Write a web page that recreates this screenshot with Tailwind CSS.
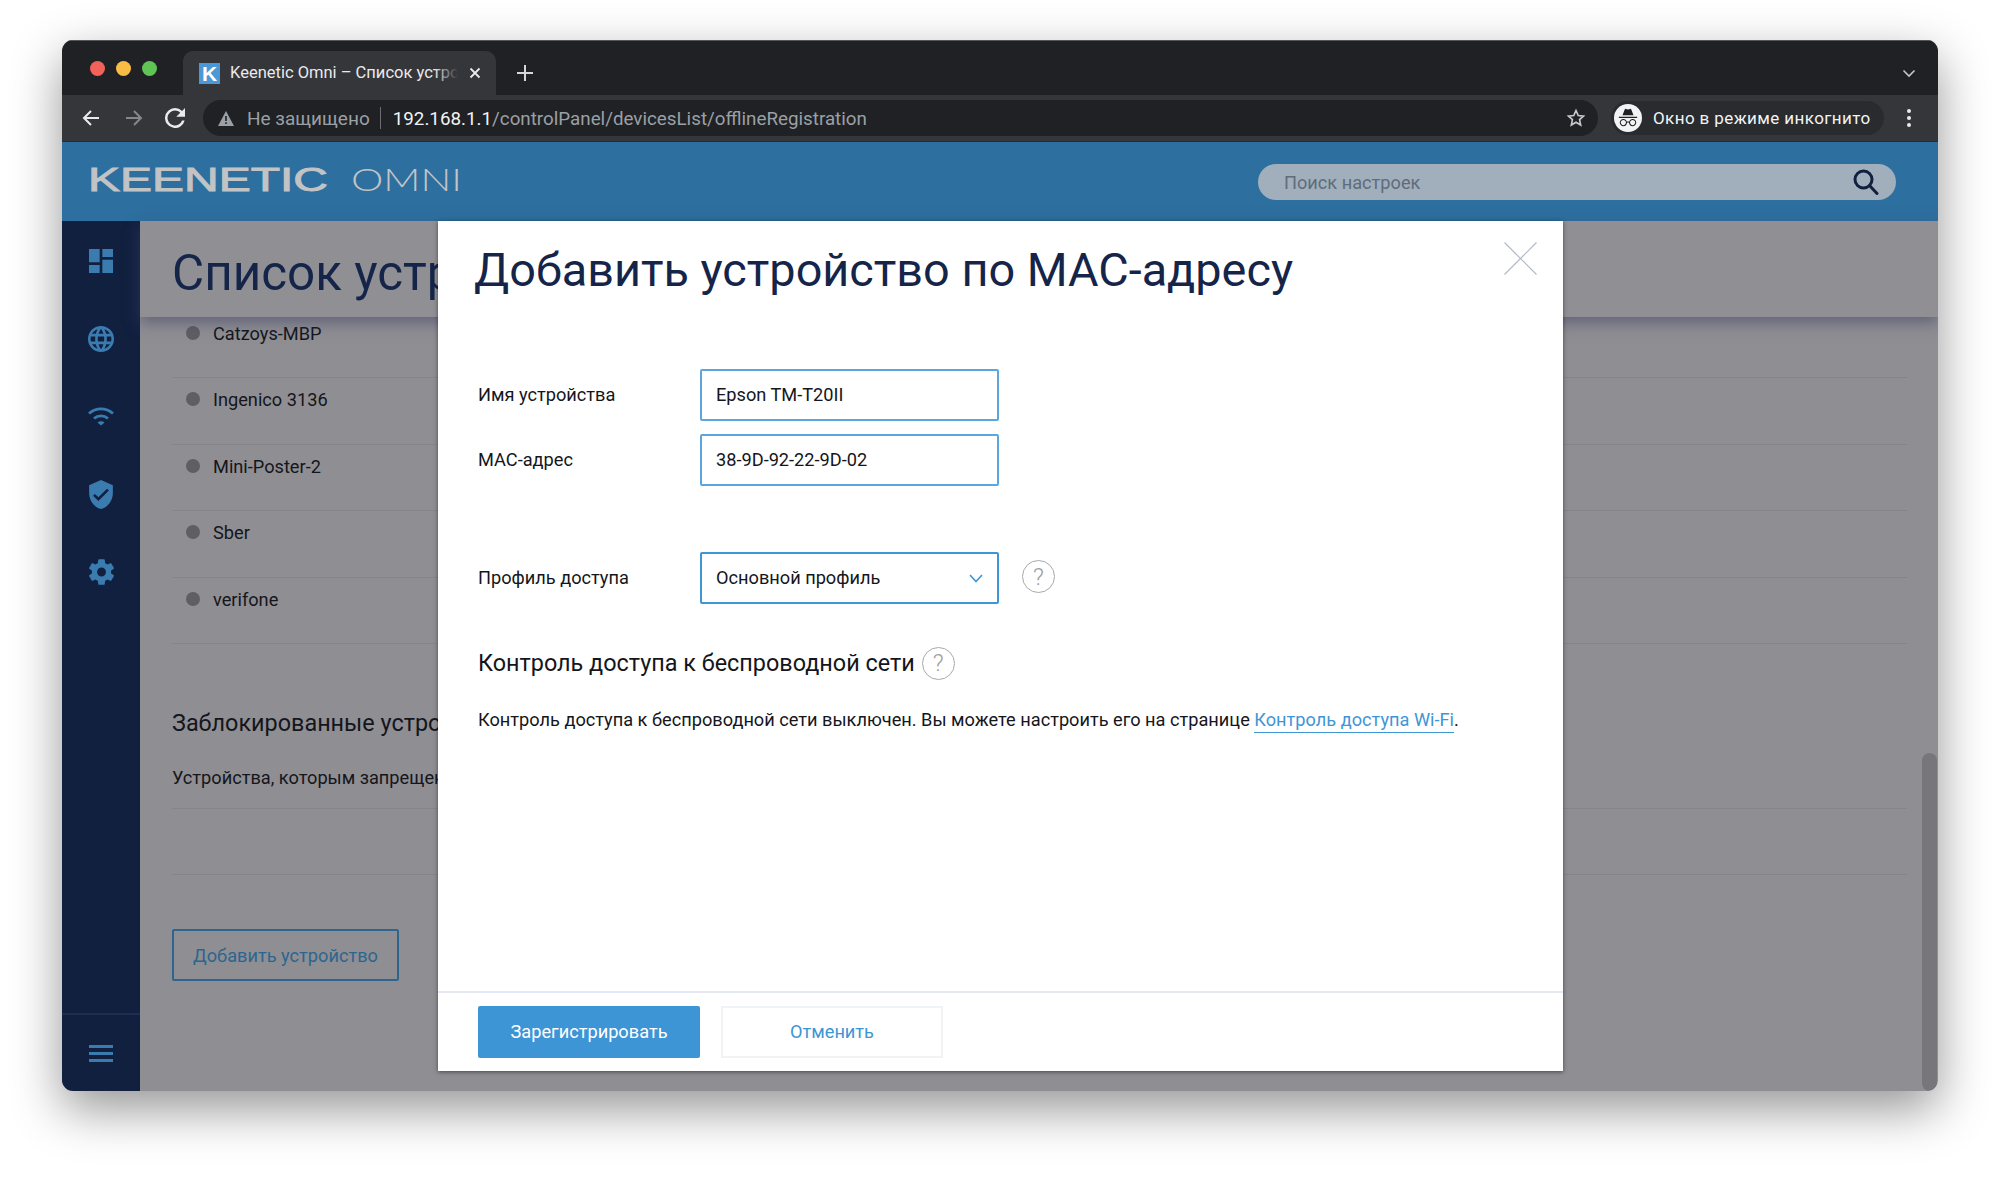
<!DOCTYPE html>
<html lang="ru">
<head>
  <meta charset="UTF-8" />
  <title>Keenetic Omni – Список устройств</title>
  <script src="https://cdn.jsdelivr.net/npm/@tailwindcss/browser@4"></script>
</head>
<body class="bg-white h-[1178px] overflow-hidden pt-[40px] pl-[62px] font-['Roboto',sans-serif]">
  <div class="relative w-[1876px] h-[1051px] rounded-[11px] overflow-hidden flex flex-col">
    <!-- browser tab strip -->
    <div class="h-[55px] shrink-0 bg-[#202124] border-t border-[#55565a] flex items-start">
      <div class="w-[121px] pl-[28px] pt-[20px] flex gap-[11px]">
        <span class="w-[15px] h-[15px] rounded-full bg-[#f0625a]"></span>
        <span class="w-[15px] h-[15px] rounded-full bg-[#f8bd45]"></span>
        <span class="w-[15px] h-[15px] rounded-full bg-[#5fc454]"></span>
      </div>
      <div class="mt-[10px] w-[313px] h-[44px] bg-[#35363a] rounded-t-[10px] flex items-center pl-[16px]">
        <span class="w-[21px] h-[21px] bg-[#4a98d8] flex items-center justify-center text-white text-[21px] font-bold leading-none font-['Liberation_Sans',sans-serif]">K</span>
        <div class="relative ml-[10px] w-[228px] overflow-hidden whitespace-nowrap text-[16.5px] text-[#e8eaed]">
          Keenetic Omni – Список устройств
          <span class="absolute right-0 top-0 h-full w-[24px] bg-gradient-to-r from-transparent to-[#35363a]"></span>
        </div>
        <svg class="ml-[11px]" width="12" height="12" viewBox="0 0 12 12"><path d="M1.5 1.5L10.5 10.5M10.5 1.5L1.5 10.5" stroke="#e8eaed" stroke-width="1.8"/></svg>
      </div>
      <svg class="ml-[21px] mt-[24px]" width="16" height="16" viewBox="0 0 16 16"><path d="M8 0V16M0 8H16" stroke="#d5d6d8" stroke-width="2"/></svg>
      <svg class="ml-auto mr-[22px] mt-[28px]" width="14" height="9" viewBox="0 0 14 9"><path d="M1.5 1.5L7 7L12.5 1.5" stroke="#c4c7c5" stroke-width="1.6" fill="none"/></svg>
    </div>

    <!-- browser toolbar -->
    <div class="h-[47px] shrink-0 bg-[#35363a] border-b border-[#2a2b2e] flex items-center pl-[20px] pr-[24px]">
      <svg width="18" height="18" viewBox="0 0 18 18" fill="none" stroke="#e8eaed" stroke-width="2"><path d="M17 9H2M9 2L2 9L9 16"/></svg>
      <svg class="ml-[25px]" width="18" height="18" viewBox="0 0 18 18" fill="none" stroke="#85878a" stroke-width="2"><path d="M1 9H16M9 2L16 9L9 16"/></svg>
      <svg class="ml-[22px]" width="20" height="20" viewBox="4 4 16 16" fill="#e8eaed"><path d="M17.65 6.35A7.96 7.96 0 0 0 12 4a8 8 0 1 0 7.73 10h-2.08A6 6 0 1 1 12 6c1.66 0 3.14.69 4.22 1.78L13 11h7V4l-2.35 2.35z"/></svg>
      <div class="ml-[18px] w-[1395px] h-[36px] rounded-full bg-[#202124] flex items-center pl-[15px] pr-[12px] whitespace-nowrap">
        <svg width="16" height="15" viewBox="0 0 16 15"><path d="M8 0L16 15H0Z" fill="#9aa0a6"/><path d="M8 5V10M8 11.2V13" stroke="#202124" stroke-width="1.6"/></svg>
        <span class="ml-[13px] mt-[2px] text-[19px] text-[#9aa0a6]">Не защищено</span>
        <span class="ml-[10px] w-px h-[22px] bg-[#6b6d70]"></span>
        <span class="ml-[12px] mt-[2px] text-[18.8px] text-[#f1f3f4]">192.168.1.1<span class="text-[#9aa0a6]">/controlPanel/devicesList/offlineRegistration</span></span>
        <svg class="ml-auto" width="20" height="20" viewBox="0 0 24 24" fill="none" stroke="#c7c9cb" stroke-width="2"><path d="M12 3l2.7 6 6.3.7-4.7 4.3 1.3 6.5L12 17.2 6.4 20.5l1.3-6.5L3 9.7 9.3 9z"/></svg>
      </div>
      <div class="ml-[13px] w-[273px] h-[34px] rounded-full bg-[#2a2b2e] flex items-center pl-[3px] whitespace-nowrap">
        <span class="w-[28px] h-[28px] rounded-full bg-[#f1f3f4] flex items-center justify-center">
          <svg width="22" height="22" viewBox="0 0 24 24" fill="#202124"><path d="M17.06 13C15.2 13 13.64 14.33 13.24 16.1C12.29 15.69 11.42 15.8 10.76 16.09C10.35 14.31 8.79 13 6.94 13C4.77 13 3 14.79 3 17C3 19.21 4.77 21 6.94 21C9 21 10.68 19.38 10.84 17.32C11.18 17.08 12.07 16.63 13.16 17.34C13.34 19.39 15 21 17.06 21C19.23 21 21 19.21 21 17C21 14.79 19.23 13 17.06 13M6.94 14.15C8.5 14.15 9.77 15.43 9.77 17C9.77 18.57 8.5 19.85 6.94 19.85C5.38 19.85 4.11 18.57 4.11 17C4.11 15.43 5.38 14.15 6.94 14.15M17.06 14.15C18.62 14.15 19.89 15.43 19.89 17C19.89 18.57 18.62 19.85 17.06 19.85C15.5 19.85 14.23 18.57 14.23 17C14.23 15.43 15.5 14.15 17.06 14.15M22 10.5H2V12H22V10.5M15.53 2.63C15.31 2.14 14.75 1.88 14.22 2.05L12 2.79L9.77 2.05L9.72 2.04C9.19 1.89 8.63 2.17 8.43 2.68L6 9H18L15.56 2.68L15.53 2.63Z"/></svg>
        </span>
        <span class="ml-[11px] mt-[2px] text-[17px] text-[#f1f3f4] tracking-[0.4px]">Окно в режиме инкогнито</span>
      </div>
      <div class="ml-[23px] flex flex-col gap-[3px]">
        <span class="w-[4px] h-[4px] rounded-full bg-[#e8eaed]"></span>
        <span class="w-[4px] h-[4px] rounded-full bg-[#e8eaed]"></span>
        <span class="w-[4px] h-[4px] rounded-full bg-[#e8eaed]"></span>
      </div>
    </div>

    <!-- keenetic header -->
    <div class="h-[79px] shrink-0 bg-[#2d6f9f] flex items-center pl-[28px]">
      <svg width="374" height="30" class="overflow-visible -ml-[2px] -mt-[5px]">
        <text x="0" y="27" textLength="240" lengthAdjust="spacingAndGlyphs" font-family="Liberation Sans" font-size="32.5" fill="#c2c3c5" stroke="#c2c3c5" stroke-width="0.9">KEENETIC</text>
        <text x="263" y="27" textLength="111" lengthAdjust="spacingAndGlyphs" font-family="Lato" font-weight="300" font-size="32" fill="#c2c3c5">OMNI</text>
      </svg>
      <div class="ml-[796px] w-[638px] h-[36px] rounded-full bg-[#a1afbc] flex items-center pl-[26px] pr-[17px]">
        <span class="mt-[2px] text-[18.2px] text-[#5f6c7b]">Поиск настроек</span>
        <svg class="ml-auto" width="26" height="26" viewBox="0 0 26 26" fill="none" stroke="#122040" stroke-width="3"><circle cx="10.5" cy="10.5" r="8.5"/><path d="M16.5 16.5L24 24.5" stroke-linecap="round"/></svg>
      </div>
    </div>

    <!-- dimmed page below the dialog -->
    <div class="flex-1 flex bg-[#8f8e93]">
      <div class="w-[78px] shrink-0 bg-[#122040] flex flex-col items-center pt-[1px] text-[#3b7cb0]">
        <div class="h-[78px] flex items-center justify-center">
          <svg width="24" height="24" viewBox="3 3 18 18" fill="currentColor"><path d="M13,3V9H21V3M13,21H21V11H13M3,21H11V15H3M3,13H11V3H3V13Z"/></svg>
        </div>
        <div class="h-[78px] flex items-center justify-center">
          <svg width="26" height="26" viewBox="2 2 20 20" fill="currentColor"><path d="M16.36,14C16.44,13.34 16.5,12.68 16.5,12C16.5,11.32 16.44,10.66 16.36,10H19.74C19.9,10.64 20,11.31 20,12C20,12.69 19.9,13.36 19.74,14M14.59,19.56C15.19,18.45 15.65,17.25 15.97,16H18.92C17.96,17.65 16.43,18.93 14.59,19.56M14.34,14H9.66C9.56,13.34 9.5,12.68 9.5,12C9.5,11.32 9.56,10.65 9.66,10H14.34C14.43,10.65 14.5,11.32 14.5,12C14.5,12.68 14.43,13.34 14.34,14M12,19.96C11.17,18.76 10.5,17.43 10.09,16H13.91C13.5,17.43 12.83,18.76 12,19.96M8,8H5.08C6.03,6.34 7.57,5.06 9.4,4.44C8.8,5.55 8.35,6.75 8,8M5.08,16H8C8.35,17.25 8.8,18.45 9.4,19.56C7.57,18.93 6.03,17.65 5.08,16M4.26,14C4.1,13.36 4,12.69 4,12C4,11.31 4.1,10.64 4.26,10H7.64C7.56,10.66 7.5,11.32 7.5,12C7.5,12.68 7.56,13.34 7.64,14M12,4.03C12.83,5.23 13.5,6.57 13.91,8H10.09C10.5,6.57 11.17,5.23 12,4.03M18.92,8H15.97C15.65,6.75 15.19,5.55 14.59,4.44C16.43,5.07 17.96,6.34 18.92,8M12,2C6.47,2 2,6.5 2,12A10,10 0 0,0 12,22A10,10 0 0,0 22,12A10,10 0 0,0 12,2Z"/></svg>
        </div>
        <div class="h-[78px] flex items-center justify-center -mt-[1px]">
          <svg width="26" height="20" viewBox="0 0 26 20" fill="none" stroke="currentColor" stroke-width="2.8"><path d="M1 7.5C8 1.2 18 1.2 25 7.5"/><path d="M6 12.5C10 9 16 9 20 12.5"/><path d="M9.5 16.5L13 19.5L16.5 16.5C14.5 14.8 11.5 14.8 9.5 16.5Z" fill="currentColor" stroke="none"/></svg>
        </div>
        <div class="h-[78px] flex items-center justify-center">
          <svg width="24" height="29" viewBox="3 1 18 22" fill="currentColor"><path d="M12,1L3,5V11C3,16.55 6.84,21.74 12,23C17.16,21.74 21,16.55 21,11V5L12,1M10,17L6,13L7.41,11.59L10,14.17L16.59,7.58L18,9L10,17Z"/></svg>
        </div>
        <div class="h-[78px] flex items-center justify-center">
          <svg width="25" height="26" viewBox="2.2 2 19.6 20" fill="currentColor"><path d="M12,15.5A3.5,3.5 0 0,1 8.5,12A3.5,3.5 0 0,1 12,8.5A3.5,3.5 0 0,1 15.5,12A3.5,3.5 0 0,1 12,15.5M19.43,12.97C19.47,12.65 19.5,12.33 19.5,12C19.5,11.67 19.47,11.34 19.43,11L21.54,9.37C21.73,9.22 21.78,8.95 21.66,8.73L19.66,5.27C19.54,5.05 19.27,4.96 19.05,5.05L16.56,6.05C16.04,5.66 15.5,5.32 14.87,5.07L14.5,2.42C14.46,2.18 14.25,2 14,2H10C9.75,2 9.54,2.18 9.5,2.42L9.13,5.07C8.5,5.32 7.96,5.66 7.44,6.05L4.95,5.05C4.73,4.96 4.46,5.05 4.34,5.27L2.34,8.73C2.21,8.95 2.27,9.22 2.46,9.37L4.57,11C4.53,11.34 4.5,11.67 4.5,12C4.5,12.33 4.53,12.65 4.57,12.97L2.46,14.63C2.27,14.78 2.21,15.05 2.34,15.27L4.34,18.73C4.46,18.95 4.73,19.03 4.95,18.95L7.44,17.94C7.96,18.34 8.5,18.68 9.13,18.93L9.5,21.58C9.54,21.82 9.75,22 10,22H14C14.25,22 14.46,21.82 14.5,21.58L14.87,18.93C15.5,18.67 16.04,18.34 16.56,17.94L19.05,18.95C19.27,19.03 19.54,18.95 19.66,18.73L21.66,15.27C21.78,15.05 21.73,14.78 21.54,14.63L19.43,12.97Z"/></svg>
        </div>
        <div class="mt-auto w-full h-[78px] border-t-2 border-[#1f2d4e] flex items-center justify-center">
          <div class="w-[24px] flex flex-col gap-[4px]">
            <span class="h-[3px] bg-[#3b7cb0]"></span>
            <span class="h-[3px] bg-[#3b7cb0]"></span>
            <span class="h-[3px] bg-[#3b7cb0]"></span>
          </div>
        </div>
      </div>

      <div class="flex-1 min-w-0">
        <div class="relative z-10 h-[96px] bg-[#908f94] shadow-[0_6px_14px_rgba(60,65,100,0.55)] pl-[32px] pt-[24px] text-[49.4px] leading-[56px] text-[#15254a] whitespace-nowrap">Список устройств</div>
        <div class="-mt-[5px] pl-[32px] pr-[31px] text-[18.2px] text-[#14161c]">
          <div class="h-[66.4px] border-b border-[#85848a] pt-[8px] flex items-start pl-[14px] gap-[13px]"><span class="w-[14px] h-[14px] mt-[6px] rounded-full bg-[#5f5e63]"></span>Catzoys-MBP</div>
          <div class="h-[66.4px] border-b border-[#85848a] pt-[8px] flex items-start pl-[14px] gap-[13px]"><span class="w-[14px] h-[14px] mt-[6px] rounded-full bg-[#5f5e63]"></span>Ingenico 3136</div>
          <div class="h-[66.4px] border-b border-[#85848a] pt-[8px] flex items-start pl-[14px] gap-[13px]"><span class="w-[14px] h-[14px] mt-[6px] rounded-full bg-[#5f5e63]"></span>Mini-Poster-2</div>
          <div class="h-[66.4px] border-b border-[#85848a] pt-[8px] flex items-start pl-[14px] gap-[13px]"><span class="w-[14px] h-[14px] mt-[6px] rounded-full bg-[#5f5e63]"></span>Sber</div>
          <div class="h-[66.4px] border-b border-[#85848a] pt-[8px] flex items-start pl-[14px] gap-[13px]"><span class="w-[14px] h-[14px] mt-[6px] rounded-full bg-[#5f5e63]"></span>verifone</div>
          <div class="mt-[63.5px] text-[23.4px] leading-[32px] whitespace-nowrap">Заблокированные устройства</div>
          <div class="mt-[27px] h-[43px] border-b border-[#85848a] whitespace-nowrap leading-[24px]">Устройства, которым запрещен доступ</div>
          <div class="h-[66px] border-b border-[#85848a]"></div>
          <div class="mt-[54px] w-[227px] h-[52px] border-2 border-[#2c668f] rounded-[2px] flex items-center justify-center text-[#2c6690]">Добавить устройство</div>
        </div>
      </div>
    </div>

    <!-- scrollbar thumb -->
    <div class="absolute right-[1px] bottom-0 w-[15px] h-[338px] rounded-full bg-[#77767b]"></div>

    <!-- dialog -->
    <div class="absolute z-20 left-[375.5px] top-[181px] w-[1125px] h-[850px] bg-white shadow-[0_1px_4px_rgba(0,0,0,0.5)] flex flex-col">
      <svg class="absolute right-[26px] top-[21px]" width="33" height="33" viewBox="0 0 33 33" stroke="#b4b9c6" stroke-width="1.2"><path d="M0.5 0.5L32.5 32.5M32.5 0.5L0.5 32.5"/></svg>
      <div class="flex-1 pl-[40.5px]">
        <h1 class="pt-[21px] -ml-[4px] text-[46.8px] leading-[56px] text-[#15254a] whitespace-nowrap">Добавить устройство по MAC-адресу</h1>
        <div class="mt-[70.5px] text-[18.2px] text-[#14161c]">
          <div class="flex items-center h-[52px]">
            <span class="w-[222px] mt-[1px]">Имя устройства</span>
            <span class="w-[299px] h-[52px] border-2 border-[#5ba6de] rounded-[2px] flex items-center pl-[14px] pt-[1px]">Epson TM-T20II</span>
          </div>
          <div class="mt-[13.5px] flex items-center h-[52px]">
            <span class="w-[222px]">MAC-адрес</span>
            <span class="w-[299px] h-[52px] border-2 border-[#5ba6de] rounded-[2px] flex items-center pl-[14px]">38-9D-92-22-9D-02</span>
          </div>
          <div class="mt-[66px] flex items-center h-[52px]">
            <span class="w-[222px]">Профиль доступа</span>
            <span class="w-[299px] h-[52px] border-2 border-[#3f96d6] rounded-[2px] flex items-center pl-[14px] pr-[14px]"><span class="-mt-[1px]">Основной профиль</span>
              <svg class="ml-auto" width="14" height="9" viewBox="0 0 14 9" fill="none" stroke="#3f96d6" stroke-width="1.6"><path d="M1 1L7 7.5L13 1"/></svg>
            </span>
            <span class="ml-[23px] -mt-[3px] w-[33px] h-[33px] rounded-full border border-[#a9a9a9] flex items-center justify-center text-[24px] font-light text-[#a0a0a0]">?</span>
          </div>
        </div>
        <div class="mt-[42px] flex items-center h-[36px] text-[23.4px] text-[#14161c]">Контроль доступа к беспроводной сети
          <span class="ml-[7px] -mt-[2px] w-[33px] h-[33px] rounded-full border border-[#a9a9a9] flex items-center justify-center text-[24px] font-light text-[#a0a0a0]">?</span>
        </div>
        <p class="mt-[24px] text-[18.2px] leading-[28px] text-[#14161c] whitespace-nowrap">Контроль доступа к беспроводной сети выключен. Вы можете настроить его на странице <a class="text-[#3f96d6] border-b border-[#3f96d6] pb-[2px]">Контроль доступа Wi-Fi</a>.</p>
      </div>
      <div class="h-[80px] shrink-0 border-t-2 border-[#e3e8f2] flex gap-[21px] pl-[40.5px] pt-[13px] text-[18.2px]">
        <span class="w-[222px] h-[52px] rounded-[2px] bg-[#3d95d5] text-white flex items-center justify-center">Зарегистрировать</span>
        <span class="w-[222px] h-[52px] border-2 border-[#f0f2f5] text-[#3d95d5] flex items-center justify-center">Отменить</span>
      </div>
    </div>
  </div>
  <!-- window drop shadow -->
  <div class="absolute left-[62px] top-[40px] -z-10 w-[1876px] h-[1051px] rounded-[11px] shadow-[0_18px_50px_rgba(0,0,0,0.42)]"></div>
</body>
</html>
